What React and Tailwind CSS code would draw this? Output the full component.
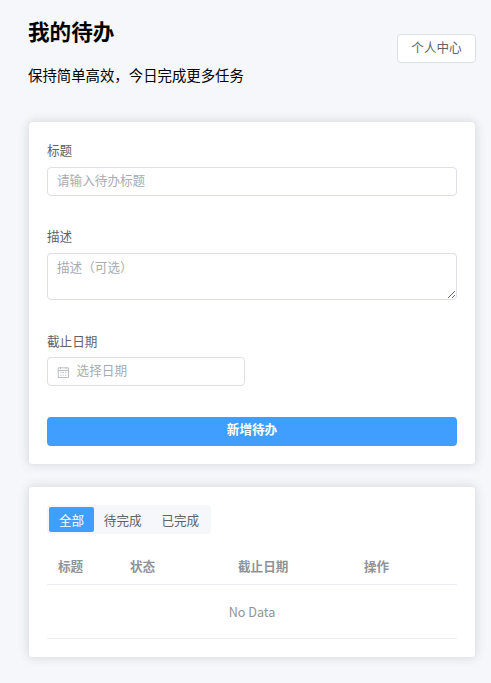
import { useState } from 'react'

const filters = [
  ['all', '全部'],
  ['todo', '待完成'],
  ['done', '已完成'],
]

function CalendarIcon() {
  return (
    <svg viewBox="0 0 1024 1024" fill="currentColor" className="mt-px h-[12.6px] w-[12.6px] shrink-0 text-[#a8abb2]">
      <path d="M128 384v512h768V192H768v32a32 32 0 1 1-64 0v-32H320v32a32 32 0 0 1-64 0v-32H128v128h768v64zm192-256h384V96a32 32 0 1 1 64 0v32h160a32 32 0 0 1 32 32v768a32 32 0 0 1-32 32H96a32 32 0 0 1-32-32V160a32 32 0 0 1 32-32h160V96a32 32 0 0 1 64 0zm-32 384h64a32 32 0 0 1 0 64h-64a32 32 0 0 1 0-64m0 192h64a32 32 0 1 1 0 64h-64a32 32 0 1 1 0-64m192-192h64a32 32 0 0 1 0 64h-64a32 32 0 0 1 0-64m0 192h64a32 32 0 1 1 0 64h-64a32 32 0 1 1 0-64m192-192h64a32 32 0 0 1 0 64h-64a32 32 0 0 1 0-64m0 192h64a32 32 0 1 1 0 64h-64a32 32 0 1 1 0-64" />
    </svg>
  )
}

function Card({ children }) {
  return (
    <section className="rounded-[4px] border border-[#e4e7ed] bg-white p-[18px] shadow-[0_0_10.8px_rgba(0,0,0,0.12)]">
      {children}
    </section>
  )
}

export default function App() {
  const [form, setForm] = useState({ title: '', desc: '', due: '' })
  const [filter, setFilter] = useState('all')

  const handleChange = e => {
    setForm(f => ({ ...f, [e.target.name]: e.target.value }))
  }

  return (
    <div className="min-h-screen bg-[#f5f7fa] pt-[14px] pr-[15px] pb-[25px] pl-[28px] font-['Noto_Sans_CJK_SC',sans-serif] text-[12.6px] text-[#606266]">
      <header className="flex h-[107px] justify-between">
        <div className="text-black">
          <h1 className="h-[36px] text-[21.6px] leading-[34px] font-bold">我的待办</h1>
          <p className="mt-[14px] text-[14.4px] leading-[22px]">保持简单高效，今日完成更多任务</p>
        </div>
        <button className="mt-[20px] h-[29px] w-[79px] rounded-[4px] border border-[#dcdfe6] bg-white pb-[3px] leading-none">
          个人中心
        </button>
      </header>

      <main className="flex flex-col gap-[21px]">
        <Card>
          <form onSubmit={e => e.preventDefault()} className="flex flex-col">
            <label htmlFor="title" className="h-[27px] leading-[19px]">标题</label>
            <input
              id="title"
              name="title"
              placeholder="请输入待办标题"
              value={form.title}
              onChange={handleChange}
              className="h-[29px] rounded-[4px] border border-[#dcdfe6] px-[9px] pb-[4px] placeholder:text-[#a8abb2] focus:border-[#409eff] focus:outline-none"
            />

            <label htmlFor="desc" className="mt-[30px] h-[27px] leading-[19px]">描述</label>
            <textarea
              id="desc"
              name="desc"
              placeholder="描述（可选）"
              value={form.desc}
              onChange={handleChange}
              className="block h-[47px] resize-y rounded-[4px] border border-[#dcdfe6] px-[9px] py-[3px] leading-[19px] placeholder:text-[#a8abb2] focus:border-[#409eff] focus:outline-none"
            />

            <label htmlFor="due" className="mt-[30px] h-[27px] leading-[21px]">截止日期</label>
            <div className="flex h-[29px] w-[198px] items-center gap-[7px] rounded-[4px] border border-[#dcdfe6] px-[9px]">
              <CalendarIcon />
              <input
                id="due"
                name="due"
                placeholder="选择日期"
                value={form.due}
                onChange={handleChange}
                className="h-full w-full min-w-0 pb-[5px] placeholder:text-[#a8abb2] focus:outline-none"
              />
            </div>

            <button
              type="submit"
              className="mt-[31px] h-[29px] rounded-[4px] bg-[#409eff] pb-[4px] leading-none font-bold text-white"
            >
              新增待办
            </button>
          </form>
        </Card>

        <Card>
          <div className="flex h-[29px] w-[164px] rounded-[4px] bg-[#f5f7fa] p-[2px]">
            {filters.map(([key, label]) => (
              <button
                key={key}
                onClick={() => setFilter(key)}
                className={
                  filter === key
                    ? 'h-[25px] shrink-0 rounded-[2px] bg-[#409eff] px-[9.9px] pt-px leading-none whitespace-nowrap text-white'
                    : 'h-[25px] shrink-0 rounded-[2px] px-[9.9px] pt-px leading-none whitespace-nowrap'
                }
              >
                {label}
              </button>
            ))}
          </div>

          <table className="mt-[14px] w-full table-fixed text-left text-[#909399]">
            <colgroup>
              <col className="w-[72px]" />
              <col className="w-[108px]" />
              <col className="w-[126px]" />
              <col />
            </colgroup>
            <thead>
              <tr className="h-[36px] border-b border-[#ebeef5]">
                <th className="pt-px pl-[11px]">标题</th>
                <th className="pt-px pl-[11px]">状态</th>
                <th className="pt-px pl-[11px]">截止日期</th>
                <th className="pt-px pl-[11px]">操作</th>
              </tr>
            </thead>
            <tbody>
              <tr className="h-[54px] border-b border-[#ebeef5]">
                <td colSpan={4} className="pt-[2px] text-center">No Data</td>
              </tr>
            </tbody>
          </table>
        </Card>
      </main>
    </div>
  )
}
